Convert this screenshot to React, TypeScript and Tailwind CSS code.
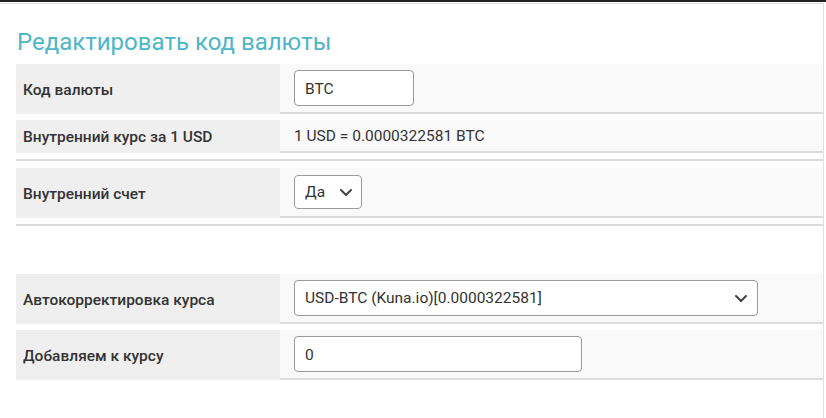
import React from 'react';

function Chevron({ className = '' }: { className?: string }) {
  return (
    <svg viewBox="0 0 12 7" className={className} fill="none" stroke="#444" strokeWidth="2" strokeLinecap="round" strokeLinejoin="round">
      <path d="M1 1l5 5 5-5" />
    </svg>
  );
}

function Row({ label, children, tall = true }: { label: string; children: React.ReactNode; tall?: boolean }) {
  return (
    <div className={`flex ${tall ? 'h-[50px]' : 'h-[33px]'}`}>
      <div className="w-[264px] shrink-0 bg-[#efefef] flex items-center pl-[7px] pt-[3px] text-[15.5px] font-medium text-[#333]">
        {label}
      </div>
      <div className="flex-1 bg-[#f9f9f9] border-b-2 border-[#dcdcdc] flex items-center pl-[14px] text-[15.5px] text-[#333]">
        {children}
      </div>
    </div>
  );
}

export default function App() {
  return (
    <div className="w-[826px] h-[418px] bg-white border-t-2 border-[#222] overflow-hidden" style={{ fontFamily: 'Roboto, "Noto Sans", sans-serif' }}>
      <div className="mt-px w-[824px] h-[420px] border-t border-r border-[#e0e0e0] pl-4">
        {/* header */}
        <h1 className="pt-[24px] pl-px text-[24px] leading-[28px] text-[#4db6c8] font-normal">Редактировать код валюты</h1>

        <div className="mt-[8px]">
          <Row label="Код валюты">
            <input
              readOnly
              value="BTC"
              className="w-[120px] h-[36px] rounded bg-white border border-[#9a9a9a] px-[10px] pt-px text-[15.5px] text-[#333] outline-none"
            />
          </Row>

          <div className="mt-[6px]">
            <Row label="Внутренний курс за 1 USD" tall={false}>
              <span className="pt-[3px]">1 USD = 0.0000322581 BTC</span>
            </Row>
          </div>

          <div className="mt-[6px] h-[2px] bg-[#dcdcdc]" />

          <div className="mt-[7px]">
            <Row label="Внутренний счет">
              <div className="w-[68px] h-[34px] rounded bg-white border border-[#9a9a9a] pl-[10px] pr-[9px] flex items-center justify-between">
                <span className="pt-px">Да</span>
                <Chevron className="w-[12px] h-[7px]" />
              </div>
            </Row>
          </div>

          <div className="mt-[6px] h-[2px] bg-[#dcdcdc]" />

          <div className="mt-[48px]">
            <Row label="Автокорректировка курса">
              <div className="w-[464px] h-[36px] rounded bg-white border border-[#9a9a9a] pl-[10px] pr-[10px] flex items-center justify-between">
                <span className="pt-px">USD-BTC (Kuna.io)[0.0000322581]</span>
                <Chevron className="w-[12px] h-[7px]" />
              </div>
            </Row>
          </div>

          <div className="mt-[6px]">
            <Row label="Добавляем к курсу">
              <input
                readOnly
                value="0"
                className="w-[288px] h-[36px] rounded bg-white border border-[#9a9a9a] px-[10px] pt-px text-[15.5px] text-[#333] outline-none"
              />
            </Row>
          </div>
        </div>
      </div>
    </div>
  );
}
